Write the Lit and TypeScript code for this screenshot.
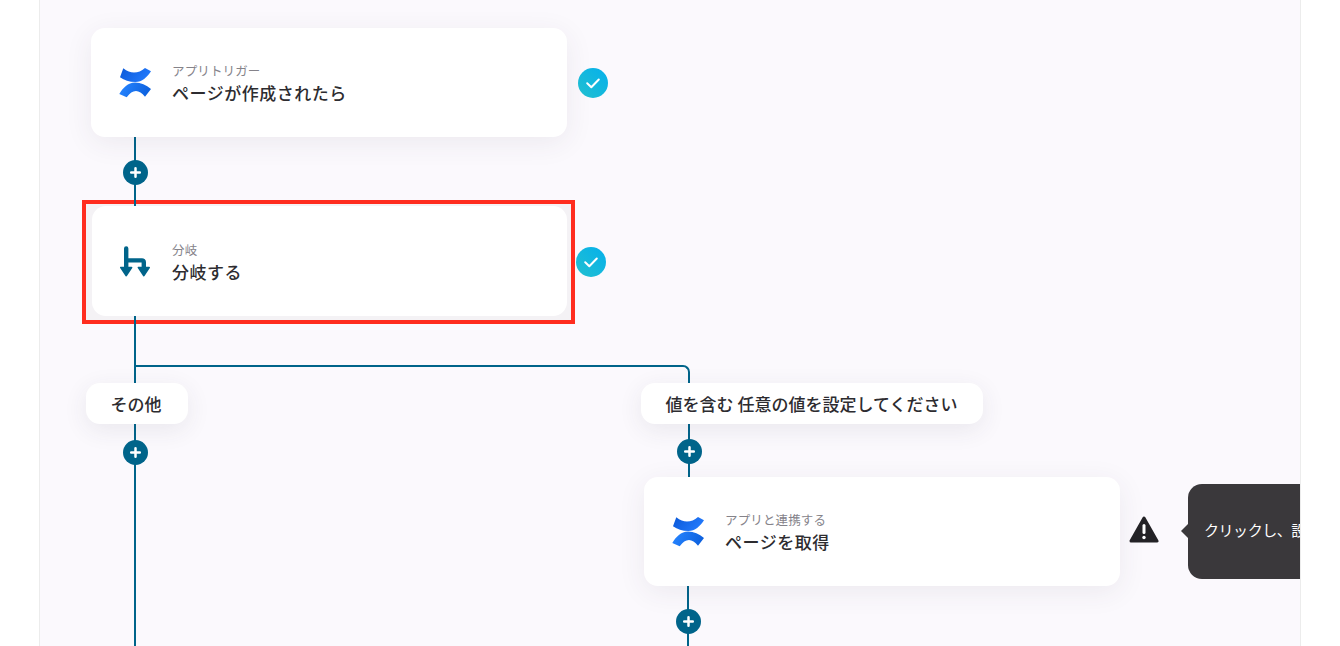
import { LitElement, html, css, svg } from 'lit';
import { customElement } from 'lit/decorators.js';

const confluenceLogo = (id: string) => html`
  <svg class="logo" viewBox="0 0 34 32">
    <defs>
      <linearGradient id="${id}a" x1="0" y1="0" x2="1" y2="0.4">
        <stop offset="0" stop-color="#0a58d8"></stop>
        <stop offset="1" stop-color="#2279fb"></stop>
      </linearGradient>
      <linearGradient id="${id}b" x1="0" y1="0.4" x2="1" y2="0.6">
        <stop offset="0" stop-color="#2684ff"></stop>
        <stop offset="1" stop-color="#0c5fdc"></stop>
      </linearGradient>
    </defs>
    <path fill="url(#${id}a)" d="M5.3 1.3C9 4.5 12.5 5.6 16 5.6C20 5.6 23.5 4 27 1L33 4.3C29 10.5 24 15 17.5 15C11 15 6.5 13.5 2 10.3Z"></path>
    <path fill="url(#${id}b)" d="M1.3 27C5 21 10 15.6 17 15.6C23 15.6 28 18 33 22L27 29.7C24 26 21 23.9 18 23.9C14.5 23.9 12 26 8.7 30.3Z"></path>
  </svg>
`;

const branchIcon = svg`
  <path fill="none" stroke="#00648a" stroke-width="4.4" stroke-linecap="round" d="M8.2 3.4V24M8.2 15.4H24a1.8 1.8 0 0 1 1.8 1.8V24"></path>
  <path fill="#00648a" stroke="#00648a" stroke-width="1.8" stroke-linejoin="round" d="M2.9 22.6H13.5L8.2 30.6ZM20.5 22.6H31.1L25.8 30.6Z"></path>
`;

const plusIcon = (cls: string) => html`
  <svg class="plus ${cls}" viewBox="0 0 25 25">
    <circle cx="12.5" cy="12.5" r="12.5" fill="#00648a"></circle>
    <path stroke="#fff" stroke-width="2.5" stroke-linecap="round" d="M12.5 8.2V16.8M8.2 12.5H16.8"></path>
  </svg>
`;

const checkIcon = (cls: string) => html`
  <svg viewBox="0 0 30 30" class="check-svg ${cls}">
    <defs>
      <linearGradient id="grad-${cls}" x1="0" y1="1" x2="1" y2="0">
        <stop offset="0" stop-color="#22c0cf"></stop>
        <stop offset="1" stop-color="#05b0ec"></stop>
      </linearGradient>
    </defs>
    <circle cx="15" cy="15" r="15" fill="url(#grad-${cls})"></circle>
    <path fill="none" stroke="#fff" stroke-width="2" stroke-linecap="round" stroke-linejoin="round" d="M9.2 15.3L13.3 19.2L20.8 11.5"></path>
  </svg>
`;

@customElement('app-root')
export class AppRoot extends LitElement {
  static styles = css`
    :host {
      display: block;
      height: 646px;
      background: #fff;
      overflow: hidden;
      font-family: "Noto Sans CJK JP", "Noto Sans", sans-serif;
      color: #2d2c30;
    }

    .panel {
      position: relative;
      box-sizing: border-box;
      margin-left: 39px;
      width: 1262px;
      height: 646px;
      background: #fbf9fd;
      border-left: 1px solid #ececec;
      border-right: 1px solid #ececec;
      overflow: hidden;
    }

    .line {
      position: absolute;
      background: #00648a;
      width: 2px;
    }
    .l1 { left: 94px; top: 137px; height: 69px; }
    .l2 { left: 94px; top: 316px; height: 330px; }
    .l3 { left: 648px; top: 383px; height: 94px; }
    .l4 { left: 647px; top: 586px; height: 60px; }

    .elbow {
      position: absolute;
      left: 96px;
      top: 365px;
      width: 554px;
      height: 18px;
      box-sizing: border-box;
      border-top: 2px solid #00648a;
      border-right: 2px solid #00648a;
      border-top-right-radius: 7px;
    }

    .plus {
      position: absolute;
      width: 25px;
      height: 25px;
    }
    .p1 { left: 82.5px; top: 159.5px; }
    .p2 { left: 82.5px; top: 439.5px; }
    .p3 { left: 636.5px; top: 438.5px; }
    .p4 { left: 635.5px; top: 608.5px; }

    .card {
      position: absolute;
      box-sizing: border-box;
      width: 476px;
      height: 109px;
      display: flex;
      align-items: center;
      padding-left: 27px;
      gap: 20px;
      background: #fff;
      border-radius: 14px;
      box-shadow: 0 6px 28px rgba(60, 50, 80, 0.08);
    }
    .c1 { left: 51px; top: 28px; }
    .c2 {
      left: 52px;
      top: 206px;
      width: 475px;
      height: 110px;
      padding-left: 26px;
      padding-top: 2px;
      box-shadow: none;
    }
    .c3 { left: 604px; top: 477px; }

    .logo {
      width: 34px;
      height: 32px;
      flex: none;
    }
    .branch {
      width: 34px;
      height: 34px;
      flex: none;
    }

    .text {
      display: flex;
      flex-direction: column;
      padding-top: 2px;
    }
    .c2 .text {
      padding-top: 0;
    }
    .sub {
      font-size: 12.5px;
      line-height: 18px;
      letter-spacing: 0.01em;
      color: #85838a;
    }
    .title {
      font-size: 17px;
      line-height: 24px;
      margin-top: 1px;
      font-weight: 500;
      letter-spacing: 0.03em;
      color: #2d2c30;
    }

    .highlight {
      position: absolute;
      left: 42px;
      top: 200px;
      width: 493px;
      height: 124px;
      box-sizing: border-box;
      background: #f4f2f5;
      border: 4px solid #ff2d1f;
    }

    .check-svg {
      position: absolute;
      width: 30px;
      height: 30px;
    }
    .k1 { left: 538px; top: 68px; }
    .k2 { left: 536px; top: 247px; }

    .tag {
      position: absolute;
      box-sizing: border-box;
      height: 41px;
      top: 383px;
      display: flex;
      align-items: center;
      justify-content: center;
      background: #fff;
      border-radius: 14px;
      font-size: 17px;
      font-weight: 500;
      white-space: pre;
      box-shadow: 0 6px 24px rgba(60, 50, 80, 0.09);
    }
    .t1 { left: 46px; width: 102px; padding-right: 2px; }
    .t2 { left: 601px; width: 342px; padding-right: 1px; }

    .warn {
      position: absolute;
      left: 1089px;
      top: 516px;
      width: 30px;
      height: 27px;
    }

    .tip {
      position: absolute;
      left: 1148px;
      top: 484px;
      width: 112px;
      height: 95px;
      box-sizing: border-box;
      padding: 34px 0 0 16px;
      background: #3a383b;
      border-radius: 14px 0 0 14px;
      color: #fff;
      font-size: 15px;
      letter-spacing: -0.03em;
      line-height: 24px;
      white-space: nowrap;
    }
    .tip::before {
      content: '';
      position: absolute;
      left: -7px;
      top: 40px;
      width: 14px;
      height: 14px;
      background: #3a383b;
      clip-path: polygon(50% 0, 100% 50%, 50% 100%, 0 50%);
    }
    .tip-text {
      display: block;
      width: 96px;
      overflow: hidden;
    }
  `;

  render() {
    return html`
      <div class="panel">
        <div class="highlight"></div>

        <div class="line l1"></div>
        <div class="line l2"></div>
        <div class="line l3"></div>
        <div class="line l4"></div>
        <div class="elbow"></div>

        <div class="card c1">
          ${confluenceLogo('g1')}
          <div class="text">
            <div class="sub">アプリトリガー</div>
            <div class="title">ページが作成されたら</div>
          </div>
        </div>
        ${checkIcon('k1')}
        ${plusIcon('p1')}

        <div class="card c2">
          <svg class="branch" viewBox="0 0 34 34">${branchIcon}</svg>
          <div class="text">
            <div class="sub">分岐</div>
            <div class="title">分岐する</div>
          </div>
        </div>
        ${checkIcon('k2')}

        <div class="tag t1">その他</div>
        ${plusIcon('p2')}
        <div class="tag t2">値を含む 任意の値を設定してください</div>
        ${plusIcon('p3')}

        <div class="card c3">
          ${confluenceLogo('g2')}
          <div class="text">
            <div class="sub">アプリと連携する</div>
            <div class="title">ページを取得</div>
          </div>
        </div>
        ${plusIcon('p4')}

        <svg class="warn" viewBox="0 0 30 27">
          <path fill="#232226" stroke="#232226" stroke-width="3" stroke-linejoin="round" d="M15 2L28 25H2Z"></path>
          <path stroke="#fff" stroke-width="3" stroke-linecap="round" d="M15 9.5V16.5"></path>
          <circle cx="15" cy="21.5" r="1.7" fill="#fff"></circle>
        </svg>
        <div class="tip"><span class="tip-text">クリックし、設</span></div>
      </div>
    `;
  }
}

declare global {
  interface HTMLElementTagNameMap {
    'app-root': AppRoot;
  }
}
